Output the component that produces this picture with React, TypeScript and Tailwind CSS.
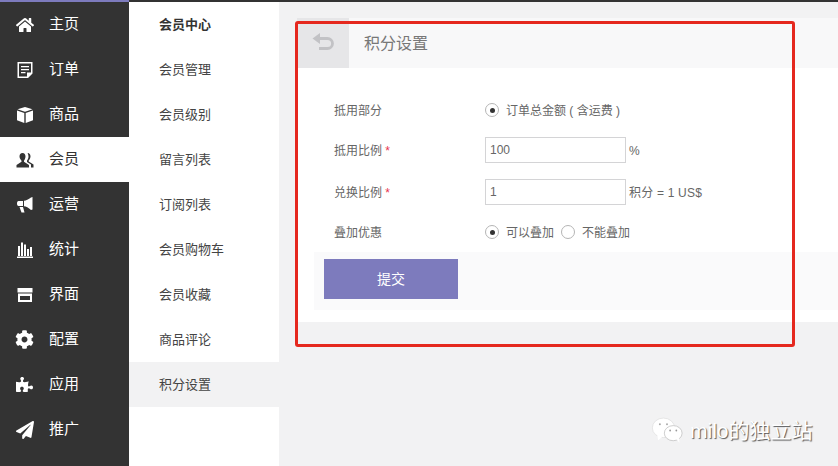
import type { ReactNode } from 'react';
import { FaHome, FaCog, FaPuzzlePiece, FaPaperPlane } from 'react-icons/fa';

function Glyph({ children }: { children: ReactNode }) {
  return (
    <svg width="18" height="18" viewBox="0 0 18 18" fill="currentColor">
      {children}
    </svg>
  );
}

const FileIcon = () => (
  <Glyph>
    <path
      fillRule="evenodd"
      d="M1.5 1h15v11.5L12 17H1.5zM3 2.500v13h8v-4h4v-9zM5 5h8v1.300H5zM5 8h8v1.300H5zM5 11h4.500v1.300H5z"
    />
  </Glyph>
);

const CubeIcon = () => (
  <Glyph>
    <path d="M9 1l7.500 2.300L9 5.800 1.500 3.300zM1 4.600l7.300 2.500V17L1 14.300zM9.700 7.100L17 4.600v9.700L9.700 17z" />
  </Glyph>
);

const UsersIcon = () => (
  <Glyph>
    <path d="M6.500 2c2 0 3 1.600 3 3.500S8.500 9 8 9.800v1L13 14v2.500H0.500V14l5-3.200v-1C5 9 3.500 7.500 3.500 5.500S4.500 2 6.500 2z" />
    <path d="M11.500 2c1.900 0 3 1.500 3 3.400 0 1.800-1.300 3.400-1.800 4.200v1l4.800 3v2.900h-2.500V13.500l-4-2.600V9.600c.8-1 1.500-2.500 1.500-4.100 0-1.100-.3-2.100-.9-2.900.3-.4.600-.6.900-.6z" />
  </Glyph>
);

const HornIcon = () => (
  <Glyph>
    <path d="M16.500 1v12.500l-1.500.5C12.500 11.500 10 10.500 8 10.200V4.800c2-.3 4.500-1.300 7-3.300zM2.500 5H7v5H2.500C1.500 10 1 9 1 7.500S1.500 5 2.500 5z" />
    <path d="M3.500 11H7l1.500 5.500h-3z" />
  </Glyph>
);

const BarsIcon = () => (
  <Glyph>
    <path d="M2 5h2v10H2zM5 1.500h2V15H5zM8 3.500h2V15H8zM11 8h2v7h-2zM14 6h2v9h-2zM1 15.500h16V17H1z" />
  </Glyph>
);

const StoreIcon = () => (
  <Glyph>
    <path
      fillRule="evenodd"
      d="M1.500 2h15v4.500h-15zM2 7.500h14V16H2zM4 10v4h10v-4z"
    />
  </Glyph>
);

const navItems = [
  { label: '主页', icon: <FaHome size={18} /> },
  { label: '订单', icon: <FileIcon /> },
  { label: '商品', icon: <CubeIcon /> },
  { label: '会员', icon: <UsersIcon />, active: true },
  { label: '运营', icon: <HornIcon /> },
  { label: '统计', icon: <BarsIcon /> },
  { label: '界面', icon: <StoreIcon /> },
  { label: '配置', icon: <FaCog size={19} /> },
  { label: '应用', icon: <FaPuzzlePiece size={17} /> },
  { label: '推广', icon: <FaPaperPlane size={18} /> },
];

const subItems = ['会员管理', '会员级别', '留言列表', '订阅列表', '会员购物车', '会员收藏', '商品评论', '积分设置'];

function Radio({ checked, label }: { checked?: boolean; label: string }) {
  return (
    <span className="flex items-center">
      <span className="flex h-[14px] w-[14px] items-center justify-center rounded-full border border-[#b5b5b5] bg-white">
        {checked && <span className="h-[5px] w-[5px] rounded-full bg-[#333]" />}
      </span>
      <span className="ml-[7px] pt-[2px]">{label}</span>
    </span>
  );
}

function Required({ label }: { label: string }) {
  return (
    <span>
      {label} <span className="text-[#e8344e]">*</span>
    </span>
  );
}

export default function App() {
  return (
    <div className="relative flex h-[466px] w-[838px] flex-col overflow-hidden bg-[#f2f2f3] font-['Liberation_Sans','Noto_Sans_CJK_SC',sans-serif]">
      <div className="flex h-[2px] shrink-0">
        <div className="w-[129px] bg-[#7d7bbd]" />
        <div className="flex-1 bg-[#333]" />
      </div>

      <div className="flex min-h-0 flex-1">
        {/* Main menu */}
        <nav className="w-[129px] shrink-0 bg-[#333]">
          {navItems.map((item) => (
            <div
              key={item.label}
              className={
                item.active
                  ? 'flex h-[45px] items-center bg-white text-[#333]'
                  : 'flex h-[45px] items-center text-white'
              }
            >
              <span className="flex w-[49px] justify-center">{item.icon}</span>
              <span className="text-[15px]">{item.label}</span>
            </div>
          ))}
        </nav>

        {/* Sub menu */}
        <aside className="w-[150px] shrink-0 bg-white text-[13px] text-[#444]">
          <div className="flex h-[45px] items-center pl-[30px] pt-[1px] font-bold text-[#333]">会员中心</div>
          {subItems.map((item) => (
            <div
              key={item}
              className={
                item === '积分设置'
                  ? 'flex h-[45px] items-center bg-[#f2f2f3] pl-[30px] pt-[1px]'
                  : 'flex h-[45px] items-center pl-[30px] pt-[1px]'
              }
            >
              {item}
            </div>
          ))}
        </aside>

        {/* Content */}
        <main className="flex-1 pl-[18px] pt-4">
          <div className="h-[304px] bg-white">
            <div className="flex h-[50px] items-center bg-[#f8f8f9]">
              <div className="flex h-full w-[52px] items-center justify-center bg-[#e6e6e8]">
                <svg width="22" height="18" viewBox="0 0 22 18" fill="none" className="mb-[2px] mr-[1px]">
                  <path d="M5 5.500h10.500a4.500 4.500 0 0 1 0 10H7" stroke="#c2c2c5" strokeWidth="2.800" />
                  <path d="M8 0 .500 5.500 8 11z" fill="#c2c2c5" />
                </svg>
              </div>
              <h1 className="ml-[15px] pt-[2px] text-base font-normal text-[#777]">积分设置</h1>
            </div>

            <div className="pl-[37px] pt-[29px] text-xs text-[#666]">
              <div className="flex h-[26px] items-center">
                <span className="w-[151px] pt-[2px]">抵用部分</span>
                <Radio checked label="订单总金额 ( 含运费 )" />
              </div>
              <div className="mt-[14px] flex h-[26px] items-center">
                <span className="w-[151px] pt-[2px]">
                  <Required label="抵用比例" />
                </span>
                <input
                  defaultValue="100"
                  className="h-[26px] w-[141px] border border-[#d4d4d6] bg-white px-1 text-xs text-[#666]"
                />
                <span className="ml-[3px] pt-[2px]">%</span>
              </div>
              <div className="mt-4 flex h-[26px] items-center">
                <span className="w-[151px] pt-[2px]">
                  <Required label="兑换比例" />
                </span>
                <input
                  defaultValue="1"
                  className="h-[26px] w-[141px] border border-[#d4d4d6] bg-white px-1 text-xs text-[#666]"
                />
                <span className="ml-[3px] pt-[2px] tracking-[0.2px]">积分 = 1 US$</span>
              </div>
              <div className="mt-[14px] flex h-[26px] items-center">
                <span className="w-[151px] pt-[2px]">叠加优惠</span>
                <span className="flex gap-[7px]">
                  <Radio checked label="可以叠加" />
                  <Radio label="不能叠加" />
                </span>
              </div>
            </div>

            <div className="ml-[17px] mt-[7px] bg-[#fafafb] pb-[11px] pl-[10px] pt-[7px]">
              <button className="h-10 w-[134px] bg-[#7d7bbd] text-sm text-white">提交</button>
            </div>
          </div>
        </main>
      </div>

      {/* Annotation box */}
      <div className="pointer-events-none absolute left-[295px] top-[21px] h-[326px] w-[500px] rounded-[3px] border-[3px] border-[#e5281e]" />

      {/* Watermark */}
      <div className="absolute left-[651px] top-[415px] flex items-center">
        <svg width="32" height="27" viewBox="0 0 36 30">
          <ellipse cx="14" cy="12" rx="12.500" ry="11" fill="#fff" stroke="#ddd" strokeWidth="0.800" />
          <path d="M7 20l1 6 5-4z" fill="#fff" />
          <ellipse cx="25" cy="18" rx="10" ry="8.500" fill="#fff" stroke="#bbb" strokeWidth="0.800" />
          <path d="M29 25l3 4-.5-6z" fill="#fff" />
          <circle cx="10" cy="8" r="1.100" fill="#aaa" />
          <circle cx="18" cy="8" r="1.100" fill="#aaa" />
          <circle cx="21.500" cy="15" r="1" fill="#999" />
          <circle cx="28.500" cy="15" r="1" fill="#999" />
        </svg>
        <span className="ml-[7px] text-[21px] text-white [text-shadow:1px_1px_1px_#555]">milo的独立站</span>
      </div>
    </div>
  );
}
